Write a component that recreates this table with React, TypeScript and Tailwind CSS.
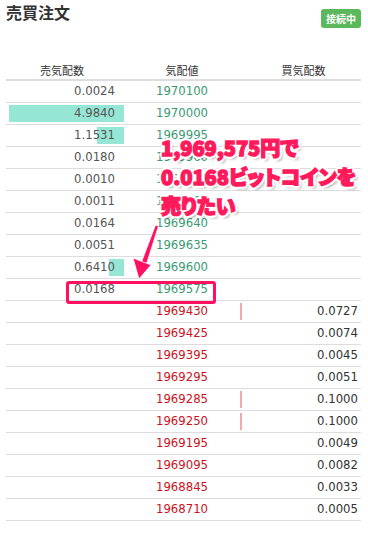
const asks: { qty: string; price: string; bar: number }[] = [
  { qty: "0.0024", price: "1970100", bar: 0 },
  { qty: "4.9840", price: "1970000", bar: 115 },
  { qty: "1.1531", price: "1969995", bar: 27 },
  { qty: "0.0180", price: "1969960", bar: 0 },
  { qty: "0.0010", price: "1969900", bar: 0 },
  { qty: "0.0011", price: "1969700", bar: 0 },
  { qty: "0.0164", price: "1969640", bar: 0 },
  { qty: "0.0051", price: "1969635", bar: 0 },
  { qty: "0.6410", price: "1969600", bar: 15 },
  { qty: "0.0168", price: "1969575", bar: 0 },
];

const bids: { price: string; qty: string; bar: boolean }[] = [
  { price: "1969430", qty: "0.0727", bar: true },
  { price: "1969425", qty: "0.0074", bar: false },
  { price: "1969395", qty: "0.0045", bar: false },
  { price: "1969295", qty: "0.0051", bar: false },
  { price: "1969285", qty: "0.1000", bar: true },
  { price: "1969250", qty: "0.1000", bar: true },
  { price: "1969195", qty: "0.0049", bar: false },
  { price: "1969095", qty: "0.0082", bar: false },
  { price: "1968845", qty: "0.0033", bar: false },
  { price: "1968710", qty: "0.0005", bar: false },
];

const num = "font-['DejaVu_Sans',sans-serif] text-[11.7px]";

export default function App() {
  return (
    <div className="relative h-[534px] w-[368px] bg-white pl-[6px] pr-[7px] font-['Noto_Sans_CJK_JP',sans-serif] text-[#333]">
      <div className="flex h-[61px] items-start justify-between">
        <h1 className="pt-[2px] text-[16px] font-bold leading-[20px] text-[#333]">売買注文</h1>
        <span className="mt-[9px] h-[19px] rounded-[3px] bg-[#5cb85c] px-[5px] text-[10px] font-bold leading-[19px] text-white">
          接続中
        </span>
      </div>

      <div className="flex h-[20px] items-center border-b-2 border-[#ddd] text-[11px] leading-none">
        <div className="w-[118px] pr-[6px] text-center">売気配数</div>
        <div className="w-[116px] text-center">気配値</div>
        <div className="flex-1 pl-[6px] text-center">買気配数</div>
      </div>

      {asks.map((r) => (
        <div key={r.price} className={`flex h-[22px] items-center border-b border-[#ddd] ${num}`}>
          <div className="relative flex h-full w-[118px] items-center justify-end pr-[9px] text-[#555]">
            {r.bar > 0 && (
              <div className="absolute right-0 top-[2px] h-[17px] bg-[#96e6d6]" style={{ width: r.bar }} />
            )}
            <span className="relative">{r.qty}</span>
          </div>
          <div className="w-[116px] text-center text-[#3a9a74]">{r.price}</div>
          <div className="flex-1" />
        </div>
      ))}

      {bids.map((r) => (
        <div key={r.price} className={`flex h-[22px] items-center border-b border-[#ddd] ${num}`}>
          <div className="w-[118px]" />
          <div className="w-[116px] text-center text-[#cc1122]">{r.price}</div>
          <div className="relative flex h-full flex-1 items-center justify-end pr-[3px] text-[#333]">
            {r.bar && <div className="absolute left-0 top-[2px] h-[17px] w-[2px] bg-[#f7a8a8]" />}
            {r.qty}
          </div>
        </div>
      ))}

      {/* annotation overlay */}
      <div className="absolute left-[66px] top-[281px] h-[23px] w-[150px] rounded-[3px] border-[3px] border-[#ff1060]" />

      <svg className="absolute left-0 top-0" width="368" height="534" viewBox="0 0 368 534">
        <g fill="#ff1060" stroke="white" strokeWidth="0.8" strokeLinejoin="round">
          <polygon points="155.5,225 158.5,226 146.5,264 141.5,262" />
          <polygon points="133,258 151,265 139,279" />
        </g>
      </svg>

      <div className="absolute left-[161px] top-[133px] whitespace-nowrap font-['Noto_Sans_CJK_JP',sans-serif] text-[20px] font-black leading-[29px] text-[#ff1a5c] [font-feature-settings:'palt'] [-webkit-text-stroke:1.4px_#ff1a5c] [text-shadow:3px_0_0_#fff,-3px_0_0_#fff,0_3px_0_#fff,0_-3px_0_#fff,2px_2px_0_#fff,-2px_-2px_0_#fff,2px_-2px_0_#fff,-2px_2px_0_#fff,3px_3px_3px_rgba(0,0,0,0.35)]">
        <div>1,969,575円で</div>
        <div>0.0168ビットコインを</div>
        <div>売りたい</div>
      </div>
    </div>
  );
}
